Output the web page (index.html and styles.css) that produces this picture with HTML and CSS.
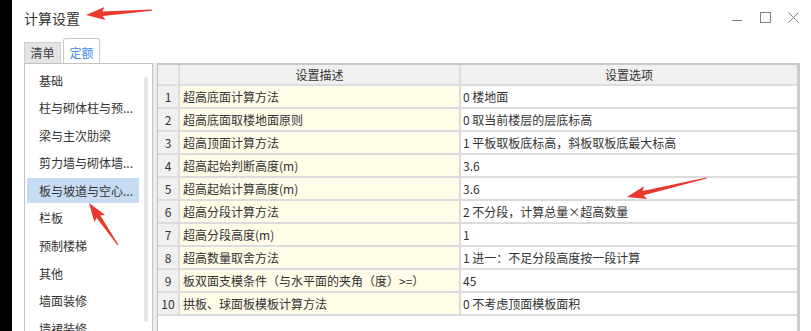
FILE: index.html
```html
<!DOCTYPE html>
<html lang="zh-CN">
<head>
  <meta charset="UTF-8">
  <meta name="viewport" content="width=device-width, initial-scale=1.0">
  <title>计算设置</title>
  <link rel="stylesheet" href="styles.css">
</head>
<body>
  <div class="window">
    <div class="titlebar">
      <div class="title">计算设置</div>
      <div class="controls">
        <svg width="11" height="11" viewBox="0 0 11 11"><path d="M0 8.5H10" stroke="#808080" stroke-width="1"/></svg>
        <svg width="11" height="11" viewBox="0 0 11 11"><rect x="0.5" y="0.5" width="10" height="10" fill="none" stroke="#808080" stroke-width="1"/></svg>
        <svg width="11" height="11" viewBox="0 0 11 11"><path d="M0.5 0.5L10.5 10.5M10.5 0.5L0.5 10.5" stroke="#808080" stroke-width="1"/></svg>
      </div>
    </div>

    <div class="tabs">
      <div class="tab">清单</div>
      <div class="tab active">定额</div>
    </div>

    <div class="content">
      <div class="list">
        <ul class="items">
          <li>基础</li>
          <li>柱与砌体柱与预...</li>
          <li>梁与主次肋梁</li>
          <li>剪力墙与砌体墙...</li>
          <li class="selected">板与坡道与空心...</li>
          <li>栏板</li>
          <li>预制楼梯</li>
          <li>其他</li>
          <li>墙面装修</li>
          <li>墙裙装修</li>
        </ul>
        <div class="scroll"></div>
      </div>
      <div class="splitter"></div>
      <div class="grid-wrap">
        <table class="grid">
          <colgroup>
            <col class="c-num">
            <col class="c-desc">
            <col class="c-opt">
          </colgroup>
          <tr class="head"><th></th><th>设置描述</th><th>设置选项</th></tr>
          <tr><td class="num">1</td><td class="desc">超高底面计算方法</td><td class="opt">0 楼地面</td></tr>
          <tr><td class="num">2</td><td class="desc">超高底面取楼地面原则</td><td class="opt">0 取当前楼层的层底标高</td></tr>
          <tr><td class="num">3</td><td class="desc">超高顶面计算方法</td><td class="opt">1 平板取板底标高，斜板取板底最大标高</td></tr>
          <tr><td class="num">4</td><td class="desc">超高起始判断高度(m)</td><td class="opt">3.6</td></tr>
          <tr><td class="num">5</td><td class="desc">超高起始计算高度(m)</td><td class="opt">3.6</td></tr>
          <tr><td class="num">6</td><td class="desc">超高分段计算方法</td><td class="opt">2 不分段，计算总量×超高数量</td></tr>
          <tr><td class="num">7</td><td class="desc">超高分段高度(m)</td><td class="opt">1</td></tr>
          <tr><td class="num">8</td><td class="desc">超高数量取舍方法</td><td class="opt">1 进一：不足分段高度按一段计算</td></tr>
          <tr><td class="num">9</td><td class="desc">板双面支模条件（与水平面的夹角（度）&gt;=）</td><td class="opt">45</td></tr>
          <tr><td class="num">10</td><td class="desc">拱板、球面板模板计算方法</td><td class="opt">0 不考虑顶面模板面积</td></tr>
        </table>
      </div>
    </div>
  </div>

  <!-- 标注箭头 -->
  <svg class="marks" width="811" height="331" viewBox="0 0 811 331">
    <polygon class="arrow" points="0,0 19,-6.5 16.5,-2.2 66,-0.6 66,0.6 16.5,2.2 19,6.5" transform="translate(86 15) rotate(-4.3)"/>
    <polygon class="arrow" points="0,0 19,-6.5 16.5,-2.2 82,-0.6 82,0.6 16.5,2.2 19,6.5" transform="translate(627 197) rotate(-13.4)"/>
    <polygon class="arrow" points="0,0 19,-6.5 16.5,-2.2 51,-0.6 51,0.6 16.5,2.2 19,6.5" transform="translate(89 203) rotate(55.4)"/>
  </svg>
</body>
</html>
```

FILE: styles.css
```css
body {
  margin: 0;
  background: #000;
  font-family: "Noto Sans CJK SC", sans-serif;
  font-size: 12px;
  color: #333;
  overflow: hidden;
  position: relative;
}
.window {
  margin-left: 12px;
  height: 331px;
  background: #fff;
  overflow: hidden;
}

/* 标题栏 */
.titlebar {
  display: flex;
  justify-content: space-between;
  height: 38px;
  padding: 0 12px;
}
.title {
  font-size: 14px;
  line-height: 18px;
  margin-top: 9px;
  color: #333;
}
.controls {
  display: flex;
  gap: 17px;
  margin-top: 12px;
}

/* 页签 */
.tabs {
  display: flex;
  align-items: flex-end;
  gap: 2px;
  height: 25px;
  padding-left: 12px;
}
.tab {
  width: 37px;
  height: 21px;
  line-height: 20px;
  text-align: center;
  background: #e3e3e3;
  border: 1px solid #cfcfcf;
  border-bottom: none;
  box-sizing: border-box;
  color: #444;
}
.tab.active {
  height: 25px;
  line-height: 27px;
  background: #fff;
  border-color: #c8c8c8;
  border-radius: 3px 3px 0 0;
  color: #3d8fe0;
}

/* 主体 */
.content {
  display: flex;
  height: 268px;
  padding: 0 11px 0 12px;
}
.list {
  display: flex;
  width: 129px;
  border: 1px solid #c4c4c4;
  border-bottom: none;
  padding: 3.5px 0 0 2px;
  box-sizing: border-box;
}
.items {
  list-style: none;
  margin: 0;
  padding: 0;
  width: 112px;
}
.items li {
  height: 25px;
  line-height: 25px;
  padding-left: 12px;
  margin-bottom: 2.6px;
  white-space: nowrap;
}
.items li.selected {
  background: #c7dcf2;
}
.scroll {
  width: 4px;
  height: 245px;
  margin: 9.5px 0 0 5px;
  background: #e6e6e6;
  border-radius: 2px;
}
.splitter {
  width: 4px;
  background: #ececec;
}
.grid-wrap {
  width: 643px;
  border-left: 1px solid #c0c0c0;
  border-top: 2px solid #c8c8c8;
  border-right: 3px solid #cccccc;
  box-sizing: border-box;
}

/* 表格 */
.grid {
  border-spacing: 0;
  table-layout: fixed;
  width: 639px;
}
.c-num { width: 22px; }
.c-desc { width: 281px; }
.c-opt { width: 336px; }
.grid th,
.grid td {
  padding: 0;
  border-right: 2px solid #dcdcdc;
  border-bottom: 2px solid #dcdcdc;
  white-space: nowrap;
  overflow: hidden;
}
.grid th:last-child,
.grid td:last-child {
  border-right: none;
}
.grid tr {
  height: 23px;
}
.grid tr.head {
  height: 21px;
}
.grid th {
  font-weight: normal;
  background: #f0f0f0;
  text-align: center;
}
.grid td.num {
  background: #f0f0f0;
  text-align: center;
}
.grid td.desc {
  background: #fffce8;
  padding-left: 3px;
}
.grid td.opt {
  padding-left: 2px;
}

/* 标注 */
.marks {
  position: absolute;
  top: 0;
  left: 0;
  pointer-events: none;
}
.arrow {
  fill: #e8392c;
}
```
